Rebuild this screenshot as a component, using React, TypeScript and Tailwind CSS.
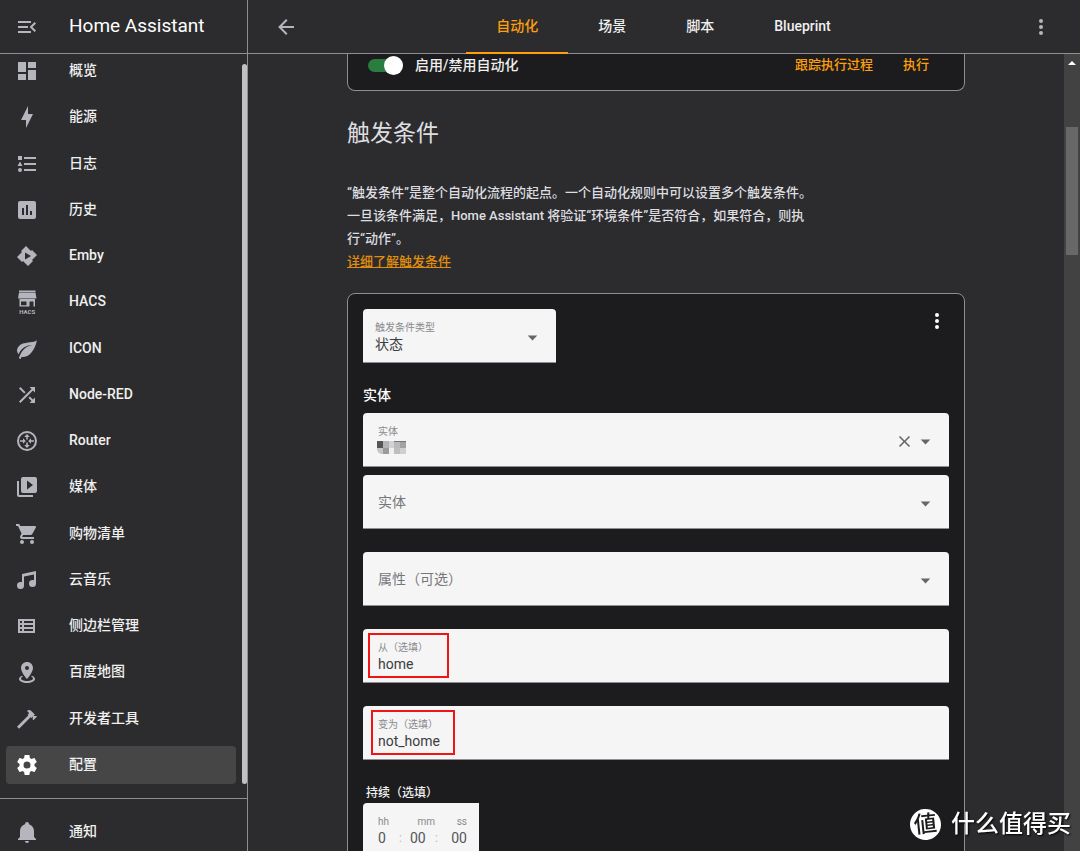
import React from "react";

const icons = {
  menuOpen:
    "M21,15.61L19.59,17L14.58,12L19.59,7L21,8.39L17.44,12L21,15.61M3,6H16V8H3V6M3,13V11H13V13H3M3,18V16H16V18H3Z",
  dashboard: "M13,3V9H21V3M13,21H21V11H13M3,21H11V15H3M3,13H11V3H3V13Z",
  bolt: "M11 15H6L13 1V9H18L11 23V15Z",
  list: "M5,9.5L7.5,14H2.5L5,9.5M3,4H7V8H3V4M5,20A2,2 0 0,0 7,18A2,2 0 0,0 5,16A2,2 0 0,0 3,18A2,2 0 0,0 5,20M9,5V7H21V5H9M9,19H21V17H9V19M9,13H21V11H9V13Z",
  chart:
    "M9 17H7V10H9V17M13 17H11V7H13V17M17 17H15V13H17V17M19 3H5A2 2 0 0 0 3 5V19A2 2 0 0 0 5 21H19A2 2 0 0 0 21 19V5A2 2 0 0 0 19 3Z",
  emby: "M11,2L6,7L7,8L2,13L7,18L8,17L13,22L18,17L17,16L22,11L17,6L16,7L11,2M10,8.5L16,12L10,15.5V8.5Z",
  leaf: "M17,8C8,10 5.9,16.17 3.82,21.34L5.71,22L6.66,19.7C7.14,19.87 7.64,20 8,20C19,20 22,3 22,3C21,5 14,5.25 9,6.25C4,7.25 2,11.5 2,13.5C2,15.5 3.75,17.25 3.75,17.25C7,8 17,8 17,8Z",
  shuffle:
    "M14.83,13.41L13.42,14.82L16.55,17.95L14.5,20H20V14.5L17.96,16.54L14.83,13.41M14.5,4L16.54,6.04L4,18.59L5.41,20L17.96,7.46L20,9.5V4M10.59,9.17L5.41,4L4,5.41L9.17,10.58L10.59,9.17Z",
  router:
    "M12,2A10,10 0 1,0 12,22A10,10 0 1,0 12,2M12,4A8,8 0 1,1 12,20A8,8 0 1,1 12,4M12,5L9.2,8H11.2V10.6H12.8V8H14.8L12,5M12,19L14.8,16H12.8V13.4H11.2V16H9.2L12,19M10.8,12L8,9.3V11.2H5V12.8H8V14.7L10.8,12M13.2,12L16,14.7V12.8H19V11.2H16V9.3L13.2,12Z",
  media:
    "M4,6H2V20A2,2 0 0,0 4,22H18V20H4V6M20,2H8A2,2 0 0,0 6,4V16A2,2 0 0,0 8,18H20A2,2 0 0,0 22,16V4A2,2 0 0,0 20,2M12,14.5V5.5L18,10L12,14.5Z",
  cart: "M17,18C15.89,18 15,18.89 15,20A2,2 0 0,0 17,22A2,2 0 0,0 19,20C19,18.89 18.1,18 17,18M1,2V4H3L6.6,11.59L5.24,14.04C5.09,14.32 5,14.65 5,15A2,2 0 0,0 7,17H19V15H7.42A0.25,0.25 0 0,1 7.17,14.75C7.17,14.7 7.18,14.66 7.2,14.63L8.1,13H15.55C16.3,13 16.96,12.58 17.3,11.97L20.88,5.5C20.95,5.34 21,5.17 21,5A1,1 0 0,0 20,4H5.21L4.27,2M7,18C5.89,18 5,18.89 5,20A2,2 0 0,0 7,22A2,2 0 0,0 9,20C9,18.89 8.1,18 7,18Z",
  music:
    "M21,3V15.5A3.5,3.5 0 0,1 17.5,19A3.5,3.5 0 0,1 14,15.5A3.5,3.5 0 0,1 17.5,12C18.04,12 18.55,12.12 19,12.34V6.47L9,8.6V17.5A3.5,3.5 0 0,1 5.5,21A3.5,3.5 0 0,1 2,17.5A3.5,3.5 0 0,1 5.5,14C6.04,14 6.55,14.12 7,14.34V6L21,3Z",
  table:
    "M3 5v14h17V5H3zm4 2v2H5V7h2zm-2 6v-2h2v2H5zm0 2h2v2H5v-2zm13 2H9v-2h9v2zm0-4H9v-2h9v2zm0-4H9V7h9v2z",
  marker:
    "M12,2C15.31,2 18,4.66 18,7.95C18,12.41 12,19 12,19C12,19 6,12.41 6,7.95C6,4.66 8.69,2 12,2M12,6A2,2 0 0,0 10,8A2,2 0 0,0 12,10A2,2 0 0,0 14,8A2,2 0 0,0 12,6M20,19C20,21.21 16.42,23 12,23C7.58,23 4,21.21 4,19C4,17.71 5.22,16.56 7.11,15.83L7.75,16.74C6.67,17.19 6,17.81 6,18.5C6,19.88 8.69,21 12,21C15.31,21 18,19.88 18,18.5C18,17.81 17.33,17.19 16.25,16.74L16.89,15.83C18.78,16.56 20,17.71 20,19Z",
  hammer:
    "M2,19.63L13.43,8.2L12.72,7.5L14.14,6.07L12,3.89C13.2,2.7 15.09,2.7 16.27,3.89L19.87,7.5L18.45,8.91H21.29L22,9.62L18.45,13.21L17.74,12.5V9.62L16.27,11.04L15.56,10.33L4.13,21.76L2,19.63Z",
  cog: "M12,15.5A3.5,3.5 0 0,1 8.5,12A3.5,3.5 0 0,1 12,8.5A3.5,3.5 0 0,1 15.5,12A3.5,3.5 0 0,1 12,15.5M19.43,12.97C19.47,12.65 19.5,12.33 19.5,12C19.5,11.67 19.47,11.34 19.43,11L21.54,9.37C21.73,9.22 21.78,8.95 21.66,8.73L19.66,5.27C19.54,5.05 19.27,4.96 19.05,5.05L16.56,6.05C16.04,5.66 15.5,5.32 14.87,5.07L14.5,2.42C14.46,2.18 14.25,2 14,2H10C9.75,2 9.54,2.18 9.5,2.42L9.13,5.07C8.5,5.32 7.96,5.66 7.44,6.05L4.95,5.05C4.73,4.96 4.46,5.05 4.34,5.27L2.34,8.73C2.21,8.95 2.27,9.22 2.46,9.37L4.57,11C4.53,11.34 4.5,11.67 4.5,12C4.5,12.33 4.53,12.65 4.57,12.97L2.46,14.63C2.27,14.78 2.21,15.05 2.34,15.27L4.34,18.73C4.46,18.95 4.73,19.03 4.95,18.95L7.44,17.94C7.96,18.34 8.5,18.68 9.13,18.93L9.5,21.58C9.54,21.82 9.75,22 10,22H14C14.25,22 14.46,21.82 14.5,21.58L14.87,18.93C15.5,18.67 16.04,18.34 16.56,17.94L19.05,18.95C19.27,19.03 19.54,18.95 19.66,18.73L21.66,15.27C21.78,15.05 21.73,14.78 21.54,14.63L19.43,12.97Z",
  bell: "M21,19V20H3V19L5,17V11C5,7.9 7.03,5.17 10,4.29C10,4.19 10,4.1 10,4A2,2 0 0,1 12,2A2,2 0 0,1 14,4C14,4.1 14,4.19 14,4.29C16.97,5.17 19,7.9 19,11V17L21,19M14,21A2,2 0 0,1 12,23A2,2 0 0,1 10,21",
  back: "M20,11V13H8L13.5,18.5L12.08,19.92L4.16,12L12.08,4.08L13.5,5.5L8,11H20Z",
  dots: "M12,16A2,2 0 0,1 14,18A2,2 0 0,1 12,20A2,2 0 0,1 10,18A2,2 0 0,1 12,16M12,10A2,2 0 0,1 14,12A2,2 0 0,1 12,14A2,2 0 0,1 10,12A2,2 0 0,1 12,10M12,4A2,2 0 0,1 14,6A2,2 0 0,1 12,8A2,2 0 0,1 10,6A2,2 0 0,1 12,4Z",
  close:
    "M19,6.41L17.59,5L12,10.59L6.41,5L5,6.41L10.59,12L5,17.59L6.41,19L12,13.41L17.59,19L19,17.59L13.41,12L19,6.41Z",
  down: "M7,10L12,15L17,10H7Z",
};

type IconName = keyof typeof icons;

function Icon({ name, className = "size-6" }: { name: IconName; className?: string }) {
  return (
    <svg viewBox="0 0 24 24" fill="currentColor" fillRule="evenodd" aria-hidden="true" className={`shrink-0 ${className}`}>
      <path d={icons[name]} />
    </svg>
  );
}

function HacsIcon() {
  return (
    <svg viewBox="0 0 24 24" fill="currentColor" aria-hidden="true" className="size-6 shrink-0">
      <path d="M4 0.500H20.500V2H4z M4 2.600H20.500L21.500 8.500H3z" />
      <path fillRule="evenodd" d="M4.500 9H20V16.500H18.500V11.500H14.500V16.500H4.500z M6 11.500V15.200H11.500V11.500z" />
      <text x="12.200" y="23.600" textAnchor="middle" fontSize="6" fontWeight="700">
        HACS
      </text>
    </svg>
  );
}

const navItems: { label: string; icon: IconName | "hacs"; active?: boolean }[] = [
  { label: "概览", icon: "dashboard" },
  { label: "能源", icon: "bolt" },
  { label: "日志", icon: "list" },
  { label: "历史", icon: "chart" },
  { label: "Emby", icon: "emby" },
  { label: "HACS", icon: "hacs" },
  { label: "ICON", icon: "leaf" },
  { label: "Node-RED", icon: "shuffle" },
  { label: "Router", icon: "router" },
  { label: "媒体", icon: "media" },
  { label: "购物清单", icon: "cart" },
  { label: "云音乐", icon: "music" },
  { label: "侧边栏管理", icon: "table" },
  { label: "百度地图", icon: "marker" },
  { label: "开发者工具", icon: "hammer" },
  { label: "配置", icon: "cog", active: true },
];

function NavLink({ label, icon, active }: { label: string; icon: IconName | "hacs"; active?: boolean }) {
  return (
    <a
      href="#"
      aria-current={active ? "page" : undefined}
      className={
        active
          ? "flex h-[38px] shrink-0 items-center gap-[30px] rounded bg-[#464646] pl-[9px] text-white"
          : "flex h-[38px] shrink-0 items-center gap-[30px] rounded pl-[9px] text-[#b5b5be]"
      }
    >
      {icon === "hacs" ? <HacsIcon /> : <Icon name={icon} />}
      <span className="pb-0.5 text-sm font-medium text-[#f0f0f0]">{label}</span>
    </a>
  );
}

function Sidebar() {
  return (
    <aside className="flex w-[248px] shrink-0 flex-col border-r border-[#8e8e93]">
      <div className="z-10 flex h-[54px] shrink-0 items-center gap-[30px] border-b border-[#8e8e93] bg-[#2c2c2e] pl-[15px]">
        <button type="button" aria-label="收起侧边栏" className="text-[#b5b5be]">
          <Icon name="menuOpen" />
        </button>
        <span className="text-[19px] text-white">Home Assistant</span>
      </div>
      <div className="flex min-h-0 flex-1">
        <nav className="-mt-0.5 flex min-w-0 flex-1 flex-col justify-between px-1.5 pb-3.5">
          {navItems.map((item) => (
            <NavLink key={item.label} {...item} />
          ))}
        </nav>
        <div className="mt-2.5 mb-3.5 w-[5px] rounded-full bg-[#c1c1c1]" />
      </div>
      <div className="shrink-0 border-t border-[#8e8e93] px-1.5 pt-3.5">
        <NavLink label="通知" icon="bell" />
      </div>
    </aside>
  );
}

const tabs = ["自动化", "场景", "脚本", "Blueprint"];

function Header() {
  return (
    <header className="flex h-[54px] shrink-0 border-b border-[#8e8e93] pr-[27px] pl-[26px] text-[#b5b5be]">
      <button type="button" aria-label="返回">
        <Icon name="back" />
      </button>
      <div role="tablist" className="-mb-px flex flex-1 justify-center">
        {tabs.map((tab, i) => (
          <button
            key={tab}
            type="button"
            role="tab"
            aria-selected={i === 0}
            className={
              i === 0
                ? "border-b-2 border-[#ff9f0a] px-[30px] text-sm font-medium text-[#ff9f0a]"
                : "border-b-2 border-transparent px-[30px] text-sm font-medium text-[#f0f0f0]"
            }
          >
            {tab}
          </button>
        ))}
      </div>
      <button type="button" aria-label="更多">
        <Icon name="dots" />
      </button>
    </header>
  );
}

const fieldBox = "flex h-[54px] items-center rounded-t border-b border-[#8e8e93] bg-[#f5f5f5] text-[#3c3c3e]";
const fieldLabel = "block text-[10px] leading-4 text-[#8a8a8e]";
const fieldValue = "block h-4 w-full appearance-none bg-transparent text-sm leading-4 outline-none";
const caret = "pointer-events-none mt-1 size-[23px] text-[#66666a]";

function EmptySelect({ label }: { label: string }) {
  return (
    <div className={`${fieldBox} pr-3`}>
      <select
        aria-label={label}
        defaultValue=""
        className="h-full min-w-0 flex-1 appearance-none bg-transparent pl-[15px] text-sm text-[#77777b] outline-none"
      >
        <option value="">{label}</option>
      </select>
      <Icon name="down" className={caret} />
    </div>
  );
}

function TextField({ id, label, value, mark }: { id: string; label: string; value: string; mark: string }) {
  return (
    <div className={`${fieldBox} relative px-[15px]`}>
      <div className="flex-1">
        <label htmlFor={id} className={fieldLabel}>
          {label}
        </label>
        <input id={id} type="text" defaultValue={value} className={fieldValue} />
      </div>
      <span className={`pointer-events-none absolute top-1 h-[45px] border-2 border-[#f01414] ${mark}`} />
    </div>
  );
}

function MaskedName() {
  return (
    <svg width="30" height="13" viewBox="0 0 30 13" aria-hidden="true" className="pointer-events-none absolute top-7 left-3.5">
      <rect x="0" y="0" width="6" height="7" fill="#555557" />
      <rect x="6" y="0" width="6" height="7" fill="#b4b4b6" />
      <rect x="12" y="0" width="5" height="7" fill="#d2d2d4" />
      <rect x="17" y="0" width="6" height="7" fill="#b9b9bb" />
      <rect x="23" y="0" width="6" height="7" fill="#a3a3a5" />
      <rect x="17" y="0" width="12" height="1" fill="#77777a" />
      <path d="M0 7H6V13H4Q1 12 0 9z" fill="#c6c6c8" />
      <rect x="6" y="7" width="6" height="6" fill="#9a9a9c" />
      <rect x="12" y="7" width="5" height="6" fill="#efeff0" />
      <rect x="17" y="7" width="6" height="6" fill="#bebec0" />
      <rect x="23" y="7" width="6" height="6" fill="#d0d0d2" />
    </svg>
  );
}

function Duration() {
  const value = "block h-4 w-full bg-transparent text-sm leading-4 outline-none";
  return (
    <fieldset>
      <legend className="pl-[3px] text-xs leading-5 font-medium text-[#f0f0f0]">持续（选填）</legend>
      <div className="flex h-[54px] w-[116px] items-center rounded-tl border-b border-[#8e8e93] bg-[#f5f5f5] pr-3 pl-[15px] text-[#55555a]">
        <div className="w-5">
          <label htmlFor="hh" className={fieldLabel}>
            hh
          </label>
          <input id="hh" defaultValue="0" className={value} />
        </div>
        <span className="w-3 self-end pb-2.5 pl-px text-xs text-[#bcbcc0]">:</span>
        <div className="w-[25px]">
          <label htmlFor="mm" className={`${fieldLabel} text-right`}>
            mm
          </label>
          <input id="mm" defaultValue="00" className={value} />
        </div>
        <span className="w-2 self-end pb-2.5 text-xs text-[#bcbcc0]">:</span>
        <div className="flex-1">
          <label htmlFor="ss" className={`${fieldLabel} text-right`}>
            ss
          </label>
          <input id="ss" defaultValue="00" className={`${value} text-right`} />
        </div>
      </div>
    </fieldset>
  );
}

function TriggerCard() {
  return (
    <section className="rounded-lg border border-[#8e8e93] bg-[#1c1c1e] p-[15px]">
      <div className="flex items-start justify-between">
        <div className={`${fieldBox} w-[193px] pr-3 pl-3`}>
          <div className="min-w-0 flex-1">
            <label htmlFor="trigger-type" className={fieldLabel}>
              触发条件类型
            </label>
            <select id="trigger-type" className={fieldValue}>
              <option>状态</option>
            </select>
          </div>
          <Icon name="down" className={caret} />
        </div>
        <button type="button" aria-label="触发条件菜单" className="text-white">
          <Icon name="dots" />
        </button>
      </div>

      <h3 className="mt-[21px] mb-1.5 text-sm leading-[23px] font-medium text-white">实体</h3>
      <div className="flex flex-col gap-[23px]">
        <div className="flex flex-col gap-2">
          <div className={`${fieldBox} relative pr-3 pl-[15px]`}>
            <div className="flex-1">
              <label htmlFor="entity" className={fieldLabel}>
                实体
              </label>
              <input id="entity" type="text" className={fieldValue} />
            </div>
            <MaskedName />
            <button type="button" aria-label="清除" className="mt-1 text-[#66666a]">
              <Icon name="close" className="size-[19px]" />
            </button>
            <Icon name="down" className={caret} />
          </div>
          <EmptySelect label="实体" />
        </div>
        <EmptySelect label="属性（可选）" />
        <TextField id="from" label="从（选填）" value="home" mark="left-[5px] w-[81px]" />
        <TextField id="to" label="变为（选填）" value="not_home" mark="left-2 w-[84px]" />
        <Duration />
      </div>
    </section>
  );
}

function Content() {
  return (
    <main className="min-w-0 flex-1 overflow-hidden">
      <div className="mx-auto w-full max-w-[618px]">
        <div className="flex h-[37px] items-start rounded-b-lg border border-t-0 border-[#8e8e93] bg-[#1c1c1e] pr-[35px] pl-5 leading-[22px]">
          <label className="flex flex-1 items-center gap-3 text-sm leading-[22px] font-medium text-[#f0f0f0]">
            <span className="flex h-[13px] w-[35px] items-center justify-end rounded-full bg-[#2a7d3e]">
              <input type="checkbox" role="switch" defaultChecked className="size-[19px] appearance-none rounded-full bg-white" />
            </span>
            启用/禁用自动化
          </label>
          <div className="flex gap-[30px] text-[13px] font-medium text-[#ff9f0a]">
            <button type="button">跟踪执行过程</button>
            <button type="button">执行</button>
          </div>
        </div>

        <h2 className="mt-[25px] text-[23px] leading-9 text-[#dedee0]">触发条件</h2>
        <div className="mt-[29px] max-w-[470px] text-[13px] leading-[23px] font-medium text-[#dedee0]">
          <p>
            “触发条件”是整个自动化流程的起点。一个自动化规则中可以设置多个触发条件。一旦该条件满足，Home Assistant
            将验证“环境条件”是否符合，如果符合，则执行“动作”。
          </p>
          <a href="#" className="text-[#e08e0b] underline">
            详细了解触发条件
          </a>
        </div>
        <div className="mt-5">
          <TriggerCard />
        </div>
      </div>
    </main>
  );
}

function Watermark() {
  return (
    <div className="pointer-events-none fixed right-[9px] bottom-[11px] flex items-center gap-2.5 text-white">
      <span className="flex size-[31px] -rotate-6 items-center justify-center rounded-full bg-white text-[23px] leading-none font-medium text-[#1c1c1e]">
        値
      </span>
      <span className="text-2xl leading-8 font-medium [text-shadow:1px_1px_2px_#000]">什么值得买</span>
    </div>
  );
}

export default function App() {
  return (
    <div
      lang="zh-CN"
      className="flex h-screen overflow-hidden bg-[#2c2c2e] font-[Roboto,'Noto_Sans_CJK_SC',sans-serif]"
    >
      <Sidebar />
      <div className="flex min-w-0 flex-1 flex-col">
        <Header />
        <div className="flex min-h-0 flex-1">
          <Content />
          <div className="flex w-4 shrink-0 flex-col items-center bg-[#424242]">
            <svg width="8" height="4" viewBox="0 0 8 4" aria-hidden="true" className="mt-[7px]">
              <path d="M4 0L8 4H0z" fill="#fff" />
            </svg>
            <div className="mt-[62px] h-32 w-3 bg-[#686868]" />
          </div>
        </div>
      </div>
      <Watermark />
    </div>
  );
}
